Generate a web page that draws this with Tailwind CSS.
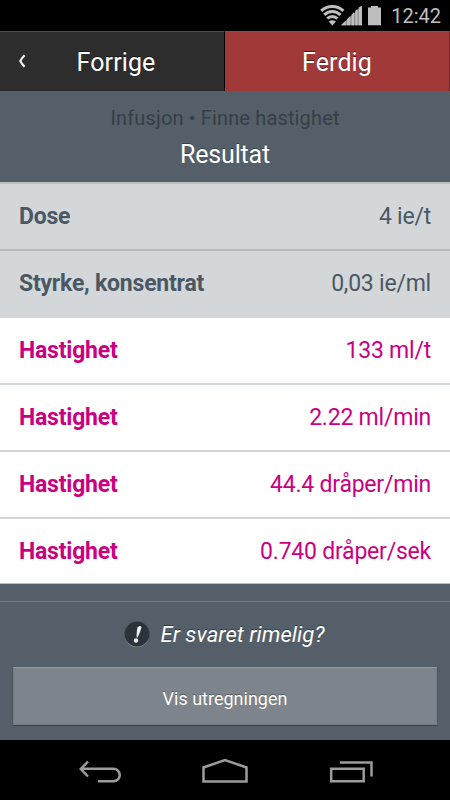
<!DOCTYPE html>
<html lang="nb">
<head>
<meta charset="utf-8">
<title>Resultat</title>
<script src="https://cdn.jsdelivr.net/npm/@tailwindcss/browser@4"></script>
</head>
<body class="w-[450px] h-[800px] overflow-hidden bg-[#555f69] font-[Roboto,sans-serif] flex flex-col">
  <!-- Status bar -->
  <div class="h-[31px] shrink-0 bg-black flex relative">
    <svg class="w-[450px] h-[31px]" viewBox="0 0 450 31">
      <g fill="none" stroke="#bebebe" stroke-width="3">
        <path d="M321.2 10.9A16 16 0 0 1 343.4 10.9"/>
        <path d="M324.2 14.9A11.3 11.3 0 0 1 340.4 14.9"/>
        <path d="M327.2 18.5A7.2 7.2 0 0 1 337.4 18.5"/>
      </g>
      <path fill="#bebebe" d="M332.3 25.5L328.6 21.4Q332.3 19 336 21.4Z"/>
      <path fill="#8f8f8f" d="M341 25.2L362 5.7V25.2Z"/>
      <path fill="#bebebe" d="M341 25.2L345.800 20.400V25.2ZM347 25.2V19.200L350.200 16V25.2ZM351.600 25.2V14.600L354 12.200V25.2ZM355.300 25.2V10.900L357.500 8.700V25.2ZM358.700 25.2V7.500L362 5.700V25.2ZM368 7.500H371V6H378V7.500H381V25.2H368Z"/>
    </svg>
    <span class="absolute right-[9px] top-[4px] text-[20px] leading-[24px] text-[#bebebe] whitespace-nowrap">12:42</span>
  </div>
  <!-- Navigation buttons -->
  <div class="h-[60px] shrink-0 flex text-white text-[25px] leading-[62px] text-center [text-shadow:0_-1px_0_#0008]">
    <div class="w-[225px] relative bg-[#2d2d2d] border-t border-t-[#4a4a4a] border-r border-r-black pl-[8px] tracking-[0.1px]">
      <svg class="absolute left-[18px] top-[22px]" width="9" height="15" viewBox="0 0 9 15"><path d="M6.600 1.300Q3.800 4.200 2.300 7Q3.800 9.900 6.600 12.800" fill="none" stroke="#eee" stroke-width="2.200"/></svg>
      <span>Forrige</span>
    </div>
    <div class="w-[225px] bg-[#a13939] border-t border-t-[#8c4c4c] border-r border-r-[#712a2a] tracking-[0.1px]"><span>Ferdig</span></div>
  </div>
  <!-- Heading -->
  <div class="h-[91px] shrink-0 pt-[15px] text-center">
    <div class="text-[20px] leading-[24px] tracking-[0.15px] text-[#363e47]">Infusjon • Finne hastighet</div>
    <div class="text-[25px] leading-[30px] mt-[10px] tracking-[-0.2px] text-white [text-shadow:0_-1px_0_#0005]">Resultat</div>
  </div>
  <!-- Result rows -->
  <div class="h-[402px] shrink-0 flex flex-col text-[23px] leading-[28px] tracking-[-0.22px]">
    <div class="h-[67px] flex justify-between items-center pl-[19px] pr-[19px] bg-[#d3d7da] text-[#4b5863] border-t-2 border-[#b9bfc3]"><b>Dose</b><span>4 ie/t</span></div>
    <div class="h-[67px] flex justify-between items-center pl-[19px] pr-[19px] bg-[#d3d7da] text-[#4b5863] border-t-2 border-[#b4b9bd]"><b>Styrke, konsentrat</b><span>0,03 ie/ml</span></div>
    <div class="h-[67px] flex justify-between items-center pl-[19px] pr-[19px] bg-white text-[#cb0081] border-t-2 border-[#d3d7da]"><b>Hastighet</b><span>133 ml/t</span></div>
    <div class="h-[67px] flex justify-between items-center pl-[19px] pr-[19px] bg-white text-[#cb0081] border-t-2 border-[#d3d7da]"><b>Hastighet</b><span>2.22 ml/min</span></div>
    <div class="h-[67px] flex justify-between items-center pl-[19px] pr-[19px] bg-white text-[#cb0081] border-t-2 border-[#d3d7da]"><b>Hastighet</b><span>44.4 dråper/min</span></div>
    <div class="h-[67px] flex justify-between items-center pt-px pl-[19px] pr-[19px] bg-white text-[#cb0081] border-t-2 border-[#d3d7da] border-b border-b-[#b9bfc3]"><b>Hastighet</b><span>0.740 dråper/sek</span></div>
  </div>
  <!-- Footer -->
  <div class="h-[156px] shrink-0 pt-[17px] flex flex-col">
    <div class="border-t border-[#717b83] h-[66px] flex justify-center items-center gap-[10px] pr-[1px]">
      <svg width="26" height="28" viewBox="0 0 26 28">
        <circle cx="13" cy="14" r="12.200" fill="#858b90"/>
        <circle cx="13" cy="13" r="12.500" fill="#2d333a"/>
        <path d="M13.700 6.200Q16.600 3.800 17.300 6.200Q17.200 9 13.600 16.400H12.600Q12.700 8 13.700 6.200Z" fill="#f2f2f2"/>
        <circle cx="12" cy="19.500" r="2.200" fill="#eee"/>
      </svg>
      <span class="text-[22px] leading-[26px] pt-px italic text-white tracking-[0.05px] [text-shadow:0_-1px_0_#0006]">Er svaret rimelig?</span>
    </div>
    <div class="mx-[13px] h-[58px] bg-[#7d848b] border border-[#737b82] border-t-[#929a9f] border-b-[#707980] shadow-[0_1px_1px_#0004] text-center text-white text-[18px] leading-[61px] [text-shadow:0_-1px_0_#0005]"><span>Vis utregningen</span></div>
  </div>
  <!-- System navigation -->
  <div class="h-[60px] shrink-0 bg-black">
    <svg width="450" height="60" viewBox="0 740 450 60" fill="none" stroke="#9c9c9c" stroke-width="2.500">
      <path d="M88 761.500L80.800 769L88 776.500M81 768.700H113.500A6.300 6.300 0 0 1 113.500 781.300H98"/>
      <path d="M203.500 781.500V767.500L225 760L246.500 767.500V781.500Z"/>
      <path d="M331.200 768.700H363.700V781.300H331.200ZM340 762.500H371.500V776.500"/>
    </svg>
  </div>
</body>
</html>
